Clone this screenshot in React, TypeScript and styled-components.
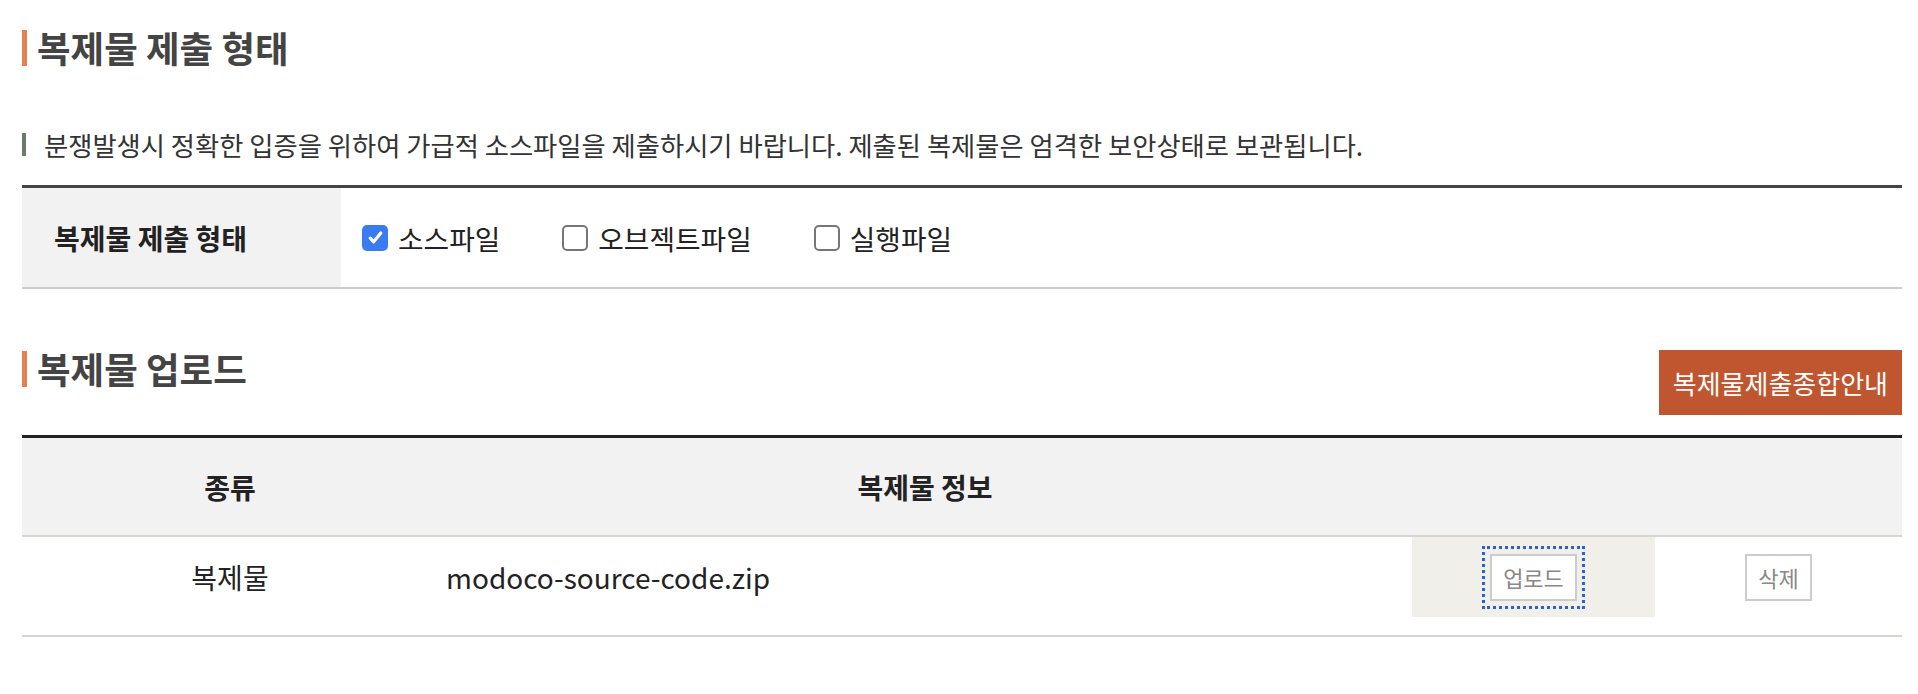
import React from 'react';
import styled, { createGlobalStyle } from 'styled-components';

const GlobalStyle = createGlobalStyle`
  html, body {
    margin: 0;
    padding: 0;
    background: #fff;
  }
  body {
    font-family: "Noto Sans CJK KR", "Noto Sans", sans-serif;
    color: #222;
  }
`;

const Page = styled.div`
  padding: 30px 16px 40px 22px;
`;

const SectionTitle = styled.h2`
  margin: 0;
  padding-left: 10px;
  border-left: 5px solid #e5804f;
  font-size: 36.5px;
  font-weight: 700;
  line-height: 36px;
  color: #444;
`;

const Notice = styled.p`
  margin: 67px 0 0;
  padding-left: 18px;
  border-left: 4px solid #6b7c67;
  font-size: 26.3px;
  line-height: 23px;
  color: #333;
`;

const FormTable = styled.div`
  margin-top: 29px;
  display: grid;
  grid-template-columns: 319px 1fr;
  height: 99px;
  border-top: 3px solid #444;
  border-bottom: 2px solid #ccc;
`;

const LabelCell = styled.div`
  display: flex;
  align-items: center;
  padding-left: 32px;
  background: #f2f2f2;
  font-size: 28px;
  font-weight: 700;
`;

const OptionCell = styled.div`
  display: flex;
  align-items: center;
  gap: 62px;
  padding-left: 21px;
`;

const Option = styled.label`
  display: inline-flex;
  align-items: center;
  gap: 10px;
  font-size: 27.8px;
  color: #222;
`;

const Box = styled.span<{ $checked?: boolean }>`
  box-sizing: border-box;
  width: 26px;
  height: 26px;
  border-radius: 5px;
  display: flex;
  align-items: center;
  justify-content: center;
  background: ${(p) => (p.$checked ? '#3a7bf2' : '#fff')};
  border: ${(p) => (p.$checked ? 'none' : '2px solid #767676')};
`;

const UploadHeader = styled.div`
  margin-top: 61px;
  display: flex;
  justify-content: space-between;
  align-items: flex-start;
  h2 {
    margin-top: 1px;
  }
`;

const GuideButton = styled.button`
  height: 65px;
  padding: 0 14px;
  border: none;
  background: #c0562f;
  color: #fff;
  font-family: inherit;
  font-size: 26px;
  cursor: pointer;
`;

const ListTable = styled.div`
  margin-top: 20px;
  border-top: 3px solid #222;
`;

const HeadRow = styled.div`
  display: grid;
  grid-template-columns: 416px 974px 243px 1fr;
  height: 97px;
  background: #f2f2f2;
  border-bottom: 2px solid #d6d6d1;
`;

const HeadCell = styled.div`
  display: flex;
  align-items: center;
  justify-content: center;
  font-size: 28px;
  font-weight: 700;
`;

const BodyRow = styled.div`
  display: grid;
  grid-template-columns: 416px 974px 243px 1fr;
  align-items: start;
  height: 98px;
  border-bottom: 2px solid #d6d6d1;
`;

const BodyCell = styled.div<{ $left?: boolean; $shaded?: boolean }>`
  height: 80px;
  display: flex;
  align-items: center;
  justify-content: ${(p) => (p.$left ? 'flex-start' : 'center')};
  padding-left: ${(p) => (p.$left ? '8px' : '0')};
  background: ${(p) => (p.$shaded ? '#f0efea' : 'transparent')};
  font-size: 28px;
`;

const SmallButton = styled.button<{ $focused?: boolean }>`
  box-sizing: border-box;
  height: 47px;
  padding: 0 11.5px;
  border: 2px solid #ccc;
  background: #fff;
  color: #888;
  font-family: inherit;
  font-size: 22px;
  outline: ${(p) => (p.$focused ? '3px dotted #2a5fd8' : 'none')};
  outline-offset: 5px;
  cursor: pointer;
`;

const Check = () => (
  <svg width="17" height="17" viewBox="0 0 16 16" fill="none">
    <path d="M3 8.6l3.3 3.5L13 3.8" stroke="#fff" strokeWidth="3" strokeLinecap="round" strokeLinejoin="round" />
  </svg>
);

const types = [
  { label: '소스파일', checked: true },
  { label: '오브젝트파일', checked: false },
  { label: '실행파일', checked: false },
];

export default function App() {
  return (
    <Page>
      <GlobalStyle />
      <SectionTitle>복제물 제출 형태</SectionTitle>
      <Notice>
        분쟁발생시 정확한 입증을 위하여 가급적 소스파일을 제출하시기 바랍니다. 제출된 복제물은 엄격한 보안상태로 보관됩니다.
      </Notice>
      <FormTable>
        <LabelCell>복제물 제출 형태</LabelCell>
        <OptionCell>
          {types.map((t) => (
            <Option key={t.label}>
              <Box $checked={t.checked}>{t.checked && <Check />}</Box>
              {t.label}
            </Option>
          ))}
        </OptionCell>
      </FormTable>

      <UploadHeader>
        <SectionTitle>복제물 업로드</SectionTitle>
        <GuideButton>복제물제출종합안내</GuideButton>
      </UploadHeader>

      <ListTable>
        <HeadRow>
          <HeadCell>종류</HeadCell>
          <HeadCell>복제물 정보</HeadCell>
          <HeadCell />
          <HeadCell />
        </HeadRow>
        <BodyRow>
          <BodyCell>복제물</BodyCell>
          <BodyCell $left>modoco-source-code.zip</BodyCell>
          <BodyCell $shaded>
            <SmallButton $focused>업로드</SmallButton>
          </BodyCell>
          <BodyCell>
            <SmallButton>삭제</SmallButton>
          </BodyCell>
        </BodyRow>
      </ListTable>
    </Page>
  );
}
